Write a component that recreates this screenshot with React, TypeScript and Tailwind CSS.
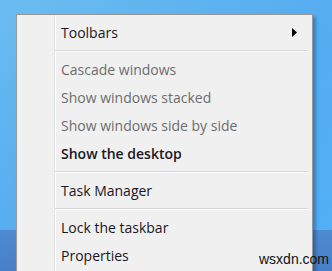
import React from 'react';

type MenuEntry =
  | { kind: 'item'; label: string; disabled?: boolean; bold?: boolean; submenu?: boolean }
  | { kind: 'sep' };

const ENTRIES: MenuEntry[] = [
  { kind: 'item', label: 'Toolbars', submenu: true },
  { kind: 'sep' },
  { kind: 'item', label: 'Cascade windows', disabled: true },
  { kind: 'item', label: 'Show windows stacked', disabled: true },
  { kind: 'item', label: 'Show windows side by side', disabled: true },
  { kind: 'item', label: 'Show the desktop', bold: true },
  { kind: 'sep' },
  { kind: 'item', label: 'Task Manager' },
  { kind: 'sep' },
  { kind: 'item', label: 'Lock the taskbar' },
  { kind: 'item', label: 'Properties' },
];

const MenuRow = ({ entry }: { entry: MenuEntry }) => {
  if (entry.kind === 'sep') {
    return (
      <div className="flex h-[9px]">
        <div className="w-[38px] shrink-0" />
        <div className="flex-1 flex flex-col justify-center pr-[4px]">
          <div className="h-px bg-[#d7d7d7]" />
          <div className="h-px bg-white" />
        </div>
      </div>
    );
  }

  return (
    <div className="flex h-[28px] items-center">
      <div className="w-[38px] shrink-0" />
      <span
        className={
          'pl-[6px] text-[14px] ' +
          (entry.disabled ? 'text-[#6d6d6d]' : 'text-[#1b1624]') +
          (entry.bold ? ' font-semibold' : '')
        }
      >
        {entry.label}
      </span>
      {entry.submenu && (
        <svg className="ml-auto mr-[15px]" width="5" height="9" viewBox="0 0 5 9">
          <path d="M0 0 L5 4.5 L0 9 Z" fill="#000" />
        </svg>
      )}
    </div>
  );
};

export default function App() {
  return (
    <div
      className="relative w-[332px] h-[271px] overflow-hidden flex flex-col"
      style={{ fontFamily: '"Open Sans", "Noto Sans", sans-serif' }}
    >
      <div className="flex-1 bg-gradient-to-br from-[#6bbdf0] via-[#56adf0] to-[#52aef5]" />
      <div className="h-[41px] bg-gradient-to-b from-[#4f8bd0] to-[#467fc6]" />

      {/* context menu */}
      <div className="absolute left-[16px] top-[14px] w-[297px] h-[270px] bg-[#f0f0f0] border border-[#979797] shadow-[3px_3px_3px_rgba(0,40,90,0.35)] pt-[3px]">
        <div className="absolute left-[37px] top-0 bottom-0 w-px bg-[#e2e3e3]" />
        <div className="absolute left-[38px] top-0 bottom-0 w-px bg-white" />
        <div className="relative flex flex-col">
          {ENTRIES.map((e, i) => (
            <MenuRow key={i} entry={e} />
          ))}
        </div>
      </div>

      <span
        className="absolute left-[259px] top-[252px] text-[14px] text-[#111] leading-none"
        style={{ fontFamily: '"Liberation Sans", Arial, sans-serif' }}
      >
        wsxdn.com
      </span>
    </div>
  );
}
